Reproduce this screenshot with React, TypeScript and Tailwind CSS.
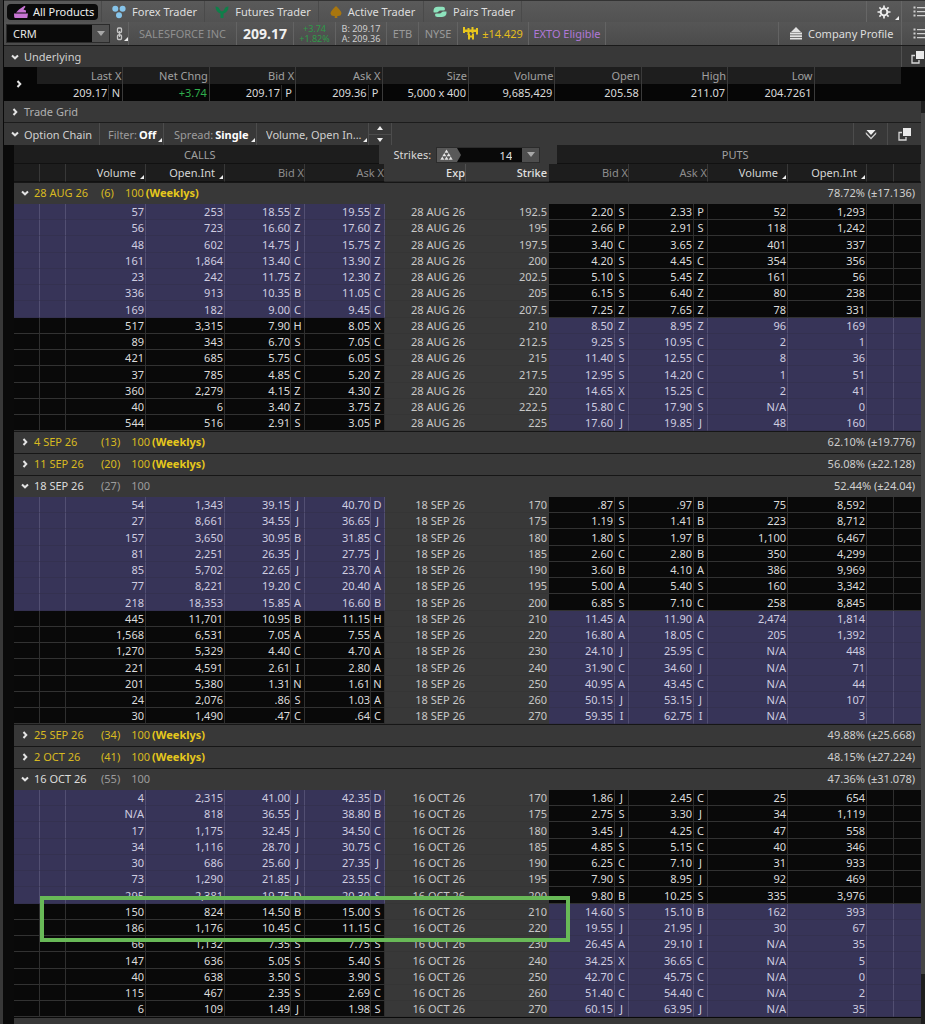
import type { ReactNode } from 'react';

interface Expiry {
  date: string;
  days: number;
  weekly: boolean;
  iv: string;
  rows?: string[];
}

// volume, open int, bid, exch, ask, exch | strike | bid, exch, ask, exch, volume, open int
const expiries: Expiry[] = [
  {
    date: '28 AUG 26', days: 6, weekly: true, iv: '78.72% (±17.136)',
    rows: [
      '57 253 18.55 Z 19.55 Z 192.5 2.20 S 2.33 P 52 1,293',
      '56 723 16.60 Z 17.60 Z 195 2.66 P 2.91 S 118 1,242',
      '48 602 14.75 J 15.75 Z 197.5 3.40 C 3.65 Z 401 337',
      '161 1,864 13.40 C 13.90 Z 200 4.20 S 4.45 C 354 356',
      '23 242 11.75 Z 12.30 Z 202.5 5.10 S 5.45 Z 161 56',
      '336 913 10.35 B 11.05 C 205 6.15 S 6.40 Z 80 238',
      '169 182 9.00 C 9.45 C 207.5 7.25 Z 7.65 Z 78 331',
      '517 3,315 7.90 H 8.05 X 210 8.50 Z 8.95 Z 96 169',
      '89 343 6.70 S 7.05 C 212.5 9.25 S 10.95 C 2 1',
      '421 685 5.75 C 6.05 S 215 11.40 S 12.55 C 8 36',
      '37 785 4.85 C 5.20 Z 217.5 12.95 S 14.20 C 1 51',
      '360 2,279 4.15 Z 4.30 Z 220 14.65 X 15.25 C 2 41',
      '40 6 3.40 Z 3.75 Z 222.5 15.80 C 17.90 S N/A 0',
      '544 516 2.91 S 3.05 P 225 17.60 J 19.85 J 48 160',
    ],
  },
  { date: '4 SEP 26', days: 13, weekly: true, iv: '62.10% (±19.776)' },
  { date: '11 SEP 26', days: 20, weekly: true, iv: '56.08% (±22.128)' },
  {
    date: '18 SEP 26', days: 27, weekly: false, iv: '52.44% (±24.04)',
    rows: [
      '54 1,343 39.15 J 40.70 D 170 .87 S .97 B 75 8,592',
      '27 8,661 34.55 J 36.65 J 175 1.19 S 1.41 B 223 8,712',
      '157 3,650 30.95 B 31.85 C 180 1.80 S 1.97 B 1,100 6,467',
      '81 2,251 26.35 J 27.75 J 185 2.60 C 2.80 B 350 4,299',
      '85 5,702 22.65 J 23.70 A 190 3.60 B 4.10 A 386 9,969',
      '77 8,221 19.20 C 20.40 A 195 5.00 A 5.40 S 160 3,342',
      '218 18,353 15.85 A 16.60 B 200 6.85 S 7.10 C 258 8,845',
      '445 11,701 10.95 B 11.15 H 210 11.45 A 11.90 A 2,474 1,814',
      '1,568 6,531 7.05 A 7.55 A 220 16.80 A 18.05 C 205 1,392',
      '1,270 5,329 4.40 C 4.70 A 230 24.10 J 25.95 C N/A 448',
      '221 4,591 2.61 I 2.80 A 240 31.90 C 34.60 J N/A 71',
      '201 5,380 1.31 N 1.61 N 250 40.95 A 43.45 C N/A 44',
      '24 2,076 .86 S 1.03 A 260 50.15 J 53.15 J N/A 107',
      '30 1,490 .47 C .64 C 270 59.35 I 62.75 I N/A 3',
    ],
  },
  { date: '25 SEP 26', days: 34, weekly: true, iv: '49.88% (±25.668)' },
  { date: '2 OCT 26', days: 41, weekly: true, iv: '48.15% (±27.224)' },
  {
    date: '16 OCT 26', days: 55, weekly: false, iv: '47.36% (±31.078)',
    rows: [
      '4 2,315 41.00 J 42.35 D 170 1.86 J 2.45 C 25 654',
      'N/A 818 36.55 J 38.80 B 175 2.75 S 3.30 J 34 1,119',
      '17 1,175 32.45 J 34.50 C 180 3.45 J 4.25 C 47 558',
      '34 1,116 28.70 J 30.75 C 185 4.85 S 5.15 C 40 346',
      '30 686 25.60 J 27.35 J 190 6.25 C 7.10 J 31 933',
      '73 1,290 21.85 J 23.55 C 195 7.90 S 8.95 J 92 469',
      '295 2,381 19.75 D 20.30 S 200 9.80 B 10.25 S 335 3,976',
      '150 824 14.50 B 15.00 S 210 14.60 S 15.10 B 162 393',
      '186 1,176 10.45 C 11.15 C 220 19.55 J 21.95 J 30 67',
      '66 1,132 7.35 S 7.75 S 230 26.45 A 29.10 I N/A 35',
      '147 636 5.05 S 5.40 S 240 34.25 X 36.65 C N/A 5',
      '40 638 3.50 S 3.90 S 250 42.70 C 45.75 C N/A 0',
      '115 467 2.35 S 2.69 C 260 51.40 C 54.40 C N/A 2',
      '6 109 1.49 J 1.98 S 270 60.15 J 63.95 J N/A 35',
    ],
  },
];

// first row index that is in the money for puts
const ATM = 7;
const marked = { date: '16 OCT 26', strike: '210' };

const ITM = 'bg-[#373458] border-r-[#524f72] border-b-[#343150]';
const OTM = 'bg-[#090909] border-r-[#2f2f2f] border-b-[#323232]';
const MID = 'bg-[#383838] border-r-[#383838] border-b-[#353535]';

function Chevron({ open }: { open: boolean }) {
  return (
    <svg width="8" height="8" viewBox="0 0 8 8" fill="none" stroke="#e4e4e4" strokeWidth="2" className="shrink-0">
      <path d={open ? 'M1 2.5 L4 5.3 L7 2.5' : 'M2.5 1 L5.3 4 L2.5 7'} />
    </svg>
  );
}

function Corner() {
  return (
    <svg width="4" height="4" viewBox="0 0 4 4" className="shrink-0 pointer-events-none">
      <path d="M4 0 V4 H0 Z" fill="#eee" />
    </svg>
  );
}

function ListIcon() {
  return (
    <svg width="12" height="11" viewBox="0 0 12 11" fill="#d0d0d0">
      <path d="M1 1h1v1H1zM4 1h8v1.300H4zM1 5h1v1H1zM4 5h8v1.300H4zM1 9h1v1H1zM4 9h8v1.300H4z" />
      <path d="M.5.5h2v2h-2zM.5 4.500h2v2h-2zM.5 8.500h2v2h-2z" />
    </svg>
  );
}

function PopOut() {
  return (
    <svg width="14" height="14" viewBox="0 0 14 14" className="shrink-0">
      <path d="M4 5.5H1V13H8V10" fill="none" stroke="#d8d8d8" strokeWidth="1.3" />
      <path d="M5 1h8v8H5z" fill="#eaeaea" />
    </svg>
  );
}

function DownTriangle() {
  return (
    <svg width="8" height="5" viewBox="0 0 8 5">
      <path d="M0 0H8L4 5Z" fill="#a8a8a8" />
    </svg>
  );
}

const tabIcons: Record<string, ReactNode> = {
  'All Products': (
    <svg width="14" height="14" viewBox="0 0 14 14" fill="#c774d2">
      <path d="M0 8.500 H14 L13.300 13 H1.300 Q.3 13 .2 12Z" />
      <path d="M2 7.500 L5 4.500 L10.500 .8 L11.500 1.800 L9.500 4.500 L12 5.500 V7.500Z" />
    </svg>
  ),
  'Forex Trader': (
    <svg width="14" height="14" viewBox="0 0 14 14" fill="#86c4ea">
      <circle cx="3.3" cy="3.8" r="3" />
      <circle cx="10.6" cy="3.8" r="3" />
      <circle cx="7" cy="10.2" r="3" />
    </svg>
  ),
  'Futures Trader': (
    <svg width="14" height="14" viewBox="0 0 14 14" fill="#0f7f4a">
      <path d="M.5 1.500 Q3.800 1.500 4.500 4 Q4.800 5.500 7 6.500 Q9.200 5.500 9.500 4 Q10.200 1.500 13.500 1.500 Q13.500 7 8.500 8.500 V13 H5.500 V8.500 Q.5 7 .5 1.500Z" />
    </svg>
  ),
  'Active Trader': (
    <svg width="12" height="14" viewBox="0 0 12 14" fill="#a8760f">
      <path d="M6 1 Q11.5 6 11.5 8.5 Q11 11.5 7.3 11 V13 H4.7 V11 Q1 11.5 .5 8.5 Q.5 6 6 1Z" />
    </svg>
  ),
  'Pairs Trader': (
    <svg width="14" height="14" viewBox="0 0 14 14" fill="#8de3bd">
      <path d="M.5 7 Q0 1.800 5 1.800 H9.500 Q12 1.800 12 4 Q12 5.600 10.500 5.600 H7.500 Q6.200 5.600 5.500 6.600 Q4.800 7.600 3.500 7.600 H1Z" />
      <path d="M13.500 6.600 Q14 12 9 12 H4.500 Q2 12 2 9.900 Q2 8.500 3.500 8.500 H6.500 Q7.800 8.500 8.500 7.400 Q9.200 6.400 10.500 6.400 H13Z" />
    </svg>
  ),
};

function Tabs() {
  const tabs = [
    { name: 'Forex Trader', width: 'w-[103px]' },
    { name: 'Futures Trader', width: 'w-[114px]' },
    { name: 'Active Trader', width: 'w-[105px]' },
    { name: 'Pairs Trader', width: 'w-[98px]' },
  ];
  return (
    <nav className="flex h-[22px] border-t border-t-[#333] bg-linear-to-b from-[#5a5a5a] to-[#525252] text-[#dedede]">
      <div className="flex w-[98px] shrink-0 items-center border-r border-[#4a4a4a] px-[3px]">
        <button className="flex h-4 w-full items-center gap-[5px] rounded bg-[#0a0a0a] pl-[7px] text-[#eee]">
          {tabIcons['All Products']}
          All Products
        </button>
      </div>
      {tabs.map(t => (
        <button
          key={t.name}
          className={`flex shrink-0 items-center justify-center gap-1.5 border-r border-[#4a4a4a] pl-[3px] ${t.width}`}
        >
          {tabIcons[t.name]}
          {t.name}
        </button>
      ))}
      <button
        aria-label="Settings"
        className="ml-auto flex w-[35px] shrink-0 items-center justify-end gap-1 border-l border-[#666] pr-0.5"
      >
        <svg width="14" height="14" viewBox="0 0 14 14" fill="none" stroke="#ededed">
          <circle cx="7" cy="7" r="3.4" strokeWidth="2" />
          <path
            d="M7 .5V3M7 11V13.500M.5 7H3M11 7H13.500M2.400 2.400L4 4M10 10L11.600 11.600M2.400 11.600L4 10M10 4L11.600 2.400"
            strokeWidth="1.7"
          />
        </svg>
        <span className="self-end pb-0.5"><Corner /></span>
      </button>
      <button aria-label="Tab list" className="flex w-6 shrink-0 items-center justify-end border-l border-[#666]">
        <ListIcon />
      </button>
    </nav>
  );
}

function SymbolBar() {
  const cell = 'flex shrink-0 items-center justify-center border-r border-[#636363]';
  return (
    <div className="flex h-6 border-b border-[#1a1a1a] bg-linear-to-b from-[#565656] to-[#4b4b4b]">
      <div className={`${cell} w-[125px] justify-start gap-1.5 pl-0.5`}>
        <div className="flex h-[19px] w-[104px] border border-[#2b2b2b] bg-[#090909]">
          <input aria-label="Symbol" defaultValue="CRM" className="w-0 flex-1 pl-1.5 text-[#e6e6e6] outline-none" />
          <button aria-label="Symbol history" className="flex w-[17px] items-center justify-center bg-[#505050]">
            <DownTriangle />
          </button>
        </div>
        <button aria-label="Link color" className="flex items-end">
          <svg width="8" height="14" viewBox="0 0 8 14" fill="none" stroke="#c4c4c4" strokeWidth="1.3">
            <rect x="1.500" y="1" width="4" height="4.500" rx="1" />
            <rect x="1.500" y="8" width="4" height="4.500" rx="1" />
            <path d="M3.500 4V10" />
          </svg>
          <Corner />
        </button>
      </div>
      <div className={`${cell} w-[108px] text-[#8f8f8f]`}>SALESFORCE INC</div>
      <div className={`${cell} w-[57px] text-[14px] font-bold text-[#f0f0f0]`}>209.17</div>
      <div className={`${cell} w-[42px] flex-col text-[9px] leading-[10px] text-[#2f9a49]`}>
        <span>+3.74</span>
        <span>+1.82%</span>
      </div>
      <div className={`${cell} w-[51px] flex-col text-[9px] leading-[10px] text-[#d0d0d0]`}>
        <span>B: 209.17</span>
        <span>A: 209.36</span>
      </div>
      <div className={`${cell} w-8 text-[#9a9a9a]`}>ETB</div>
      <div className={`${cell} w-[39px] text-[#9a9a9a]`}>NYSE</div>
      <div className={`${cell} w-[71px] gap-[3px] text-[#e3bd1d]`}>
        <svg width="16" height="13" viewBox="0 0 16 13" fill="#e8c61c">
          <path d="M0 0H2V2.500H4.500V1H6.500V2.500H8.500V0H10.500V2.500H13V1H15V7.500H13V5H10.500V6H8.500V5H6.500V8H4.500V5H2V6H0Z" />
          <path d="M5 7H7V8.500H9V6.500H11V12.500H9V10.500H7V12.500H5Z" />
        </svg>
        ±14.429
      </div>
      <div className={`${cell} w-[77px] text-[#b078d8]`}>EXTO Eligible</div>
      <button className="ml-auto flex w-[123px] shrink-0 items-center gap-1.5 border-l border-[#636363] pl-[11px] text-[#dedede]">
        <svg width="12" height="13" viewBox="0 0 12 13" fill="#e2e2e2">
          <path d="M6 0L11 5H1ZM0 5.500H12V7.500H0ZM0 8.300H12V10H0ZM0 10.800H12V12.500H0Z" />
        </svg>
        Company Profile
      </button>
      <button aria-label="Gadget list" className="flex w-6 shrink-0 items-center justify-end border-l border-[#636363]">
        <ListIcon />
      </button>
    </div>
  );
}

function Underlying() {
  const quotes = [
    { label: 'Last X', value: '209.17', exch: 'N' },
    { label: 'Net Chng', value: '+3.74' },
    { label: 'Bid X', value: '209.17', exch: 'P' },
    { label: 'Ask X', value: '209.36', exch: 'P' },
    { label: 'Size', value: '5,000 x 400' },
    { label: 'Volume', value: '9,685,429' },
    { label: 'Open', value: '205.58' },
    { label: 'High', value: '211.07' },
    { label: 'Low', value: '204.7261' },
  ];
  return (
    <section>
      <div className="flex h-[21px] items-center bg-[#383838] text-[#d0d0d0]">
        <button className="flex items-center gap-[5px] pl-[7px]">
          <Chevron open />
          Underlying
        </button>
        <button aria-label="Detach underlying" className="ml-auto flex h-full w-6 items-center justify-end border-l border-[#505050]">
          <PopOut />
        </button>
      </div>
      <div className="flex bg-[#060606]">
        <button aria-label="Expand quote" className="flex w-[33px] items-center justify-center pr-1">
          <Chevron open={false} />
        </button>
        <div className="min-w-0 flex-1">
          <table className="w-full table-fixed border-separate border-spacing-0 text-right">
            <thead>
              <tr className="h-[17px]">
                {quotes.map(q => (
                  <th key={q.label} className="border-r border-[#3a3a3a] bg-[#1e1e1e] p-0 pr-px text-right font-normal text-[#a0a0a0]">
                    {q.label}
                  </th>
                ))}
                <th className="bg-[#1e1e1e] p-0" />
              </tr>
            </thead>
            <tbody>
              <tr className="h-[17px] text-[#dadada]">
                {quotes.map(q => (
                  <td key={q.label} className="border-r border-[#3a3a3a] p-0">
                    <div className={`flex justify-end ${q.label === 'Net Chng' ? 'text-[#2fae4c]' : ''}`}>
                      <span className={q.exch ? 'pr-px' : 'pr-0.5'}>{q.value}</span>
                      {q.exch && <span className="w-3.5 border-l border-[#2c2c2c] text-center">{q.exch}</span>}
                    </div>
                  </td>
                ))}
                <td className="p-0" />
              </tr>
            </tbody>
          </table>
        </div>
        <div className="w-6 shrink-0" />
      </div>
    </section>
  );
}

function ChainBar() {
  const menu = 'flex shrink-0 items-center border-r border-[#4c4c4c] text-[#9c9c9c]';
  const select = 'appearance-none bg-transparent outline-none';
  return (
    <div className="flex h-[22px] bg-[#383838]">
      <button className="flex w-[96px] shrink-0 items-center gap-[5px] border-r border-[#4c4c4c] pl-[7px] text-[#d0d0d0]">
        <Chevron open />
        Option Chain
      </button>
      <label className={`${menu} w-16 pl-2 pr-px`}>
        Filter:
        <select className={`${select} ml-0.5 w-0 flex-1 font-bold text-white`}>
          <option>Off</option>
        </select>
        <span className="self-end pb-[3px]"><Corner /></span>
      </label>
      <label className={`${menu} w-[93px] pl-[10px] pr-px`}>
        Spread:
        <select className={`${select} ml-0.5 w-0 flex-1 font-bold text-white`}>
          <option>Single</option>
        </select>
        <span className="self-end pb-[3px]"><Corner /></span>
      </label>
      <div className={`${menu} w-28 pl-[9px] pr-px`}>
        <select aria-label="Layout" className={`${select} w-0 flex-1 text-[#d0d0d0]`}>
          <option>Volume, Open In...</option>
        </select>
        <span className="self-end pb-[3px]"><Corner /></span>
      </div>
      <div className="flex w-[23px] shrink-0 flex-col border-r border-[#4c4c4c]">
        <button aria-label="Previous layout" className="flex flex-1 items-center justify-center border-b border-[#4c4c4c]">
          <svg width="6" height="4" viewBox="0 0 6 4"><path d="M3 0L6 4H0Z" fill="#eee" /></svg>
        </button>
        <button aria-label="Next layout" className="flex flex-1 items-center justify-center">
          <svg width="6" height="4" viewBox="0 0 6 4"><path d="M3 4L6 0H0Z" fill="#eee" /></svg>
        </button>
      </div>
      <button aria-label="Collapse all" className="ml-auto flex w-[34px] items-center justify-center border-l border-[#4c4c4c]">
        <svg width="12" height="11" viewBox="0 0 12 11">
          <path d="M1.500 1H10.500L6 6Z" fill="#f0f0f0" />
          <path d="M.8 3L6 8.500L11.200 3V5L6 10.500L.8 5Z" fill="#d0d0d0" />
        </svg>
      </button>
      <button aria-label="Detach option chain" className="flex w-[34px] items-center justify-center border-l border-[#4c4c4c]">
        <PopOut />
      </button>
    </div>
  );
}

function StrikesBar() {
  return (
    <div className="flex h-[19px] text-[#a0a0a0]">
      <div className="flex flex-1 items-center justify-center border-b border-[#111] bg-[#1d1d1d] pl-[7px]">CALLS</div>
      <div className="flex w-[178px] items-center bg-[#383838] pl-[15px] text-[#d8d8d8]">
        <label htmlFor="strikes">Strikes:</label>
        <div className="ml-[5px] flex h-4 w-[104px] border border-[#2b2b2b] bg-[#090909]">
          <button aria-label="Strike mode" className="flex">
            <svg width="24" height="14" viewBox="0 0 24 14">
              <path d="M0 0H20L24 7L20 14H0Z" fill="#595959" />
              <g fill="#e4e4e4">
                <path d="M9.500 1.500L11.500 4.800H7.500ZM7.300 5L9.300 8.300H5.300ZM11.700 5L13.700 8.300H9.700ZM5.300 8.500L7.300 11.800H3.300ZM9.500 8.500L11.500 11.800H7.500ZM13.700 8.500L15.700 11.800H11.700Z" />
              </g>
            </svg>
          </button>
          <select id="strikes" className="w-0 flex-1 appearance-none pr-2.5 text-[#e0e0e0] outline-none [text-align-last:right]">
            <option>14</option>
          </select>
          <span className="pointer-events-none flex w-[17px] items-center justify-center bg-[#4e4e4e]">
            <DownTriangle />
          </span>
        </div>
      </div>
      <div className="flex flex-1 items-center justify-center border-b border-[#111] bg-[#1d1d1d] pr-[7px]">PUTS</div>
    </div>
  );
}

function SortHead({ children }: { children: ReactNode }) {
  return (
    <th className="border-r border-b border-r-[#383838] border-b-[#111] p-0 font-normal text-[#d6d6d6]">
      <button className="flex w-full items-center justify-end gap-1 pr-px">
        {children}
        <span className="self-end pb-px"><Corner /></span>
      </button>
    </th>
  );
}

function QuoteHead({ children }: { children: ReactNode }) {
  return (
    <th colSpan={2} className="border-r border-b border-r-[#383838] border-b-[#111] p-0 text-right font-normal text-[#8d8d8d]">
      {children}
    </th>
  );
}

function BlankHead() {
  return <th className="border-r border-b border-r-[#383838] border-b-[#111] p-0" />;
}

function OptionRow({ date, row, index }: { date: string; row: string; index: number }) {
  const v = row.split(' ');
  const call = index < ATM ? ITM : OTM;
  const put = index < ATM ? OTM : ITM;
  const td = 'border-r border-b p-0 ';
  const ink = index < ATM ? 'text-[#cfcde0]' : 'text-[#dcdcdc]';
  const putInk = index < ATM ? 'text-[#dcdcdc]' : 'text-[#cfcde0]';
  const isMarked = date === marked.date && v[6] === marked.strike;

  return (
    <tr className="h-4 text-right leading-[15px] nth-[4n]:h-[17px]">
      <td className={td + call} />
      <td className={`${td}${call} ${isMarked ? 'relative z-10' : ''}`}>
        {isMarked && (
          <div className="pointer-events-none absolute -top-2 left-0 h-[46px] w-[530px] border-4 border-[#68b957]" />
        )}
      </td>
      <td className={`${td}${call} ${ink} pr-px`}>{v[0]}</td>
      <td className={`${td}${call} ${ink} pr-px`}>{v[1]}</td>
      <td className={`${td}${call} ${ink}`}>{v[2]}</td>
      <td className={`${td}${call} ${ink} text-center`}>{v[3]}</td>
      <td className={`${td}${call} ${ink}`}>{v[4]}</td>
      <td className={`${td}${call} ${ink} text-center`}>{v[5]}</td>
      <td className={`${td}${MID} border-r-[#555] text-[#c8c8c8]`}>{date}</td>
      <td className={`${td}${MID} pr-px text-[#c8c8c8]`}>{v[6]}</td>
      <td className={`${td}${put} ${putInk} pr-px`}>{v[7]}</td>
      <td className={`${td}${put} ${putInk} text-center`}>{v[8]}</td>
      <td className={`${td}${put} ${putInk} pr-px`}>{v[9]}</td>
      <td className={`${td}${put} ${putInk} text-center`}>{v[10]}</td>
      <td className={`${td}${put} ${putInk} pr-px`}>{v[11]}</td>
      <td className={`${td}${put} ${putInk} pr-px`}>{v[12]}</td>
      <td className={td + put} />
      <td className={`border-b p-0 ${put}`} />
    </tr>
  );
}

function ExpiryGroup({ expiry }: { expiry: Expiry }) {
  const { date, days, weekly, iv, rows } = expiry;
  return (
    <tbody>
      <tr className="h-[22px]">
        <td colSpan={18} className="border-t border-[#161616] bg-[#383838] p-0 pb-0.5">
          <div className={`flex items-center ${weekly ? 'text-[#d8ba20]' : 'text-[#9c9c9c]'}`}>
            <button className={`flex w-[87px] items-center gap-[5px] pl-[7px] ${weekly ? '' : 'text-[#dcdcdc]'}`}>
              <Chevron open={!!rows} />
              {date}
            </button>
            <span className="mr-[11px]">({days})</span>
            <span>100</span>
            {weekly && <span className="ml-0.5 font-bold text-[#e6c81c]">(Weeklys)</span>}
            <span className="ml-auto pr-1.5 text-[#cfcfcf]">{iv}</span>
          </div>
        </td>
      </tr>
      {rows?.map((r, i) => <OptionRow key={r} date={date} row={r} index={i} />)}
    </tbody>
  );
}

function ChainTable() {
  return (
    <table className="w-full table-fixed border-separate border-spacing-0">
      <colgroup>
        <col className="w-[26px]" />
        <col className="w-[26px]" />
        <col className="w-[80px]" />
        <col className="w-[79px]" />
        <col className="w-[66px]" />
        <col className="w-[14px]" />
        <col className="w-[66px]" />
        <col className="w-[14px]" />
        <col className="w-[81px]" />
        <col className="w-[83px]" />
        <col className="w-[66px]" />
        <col className="w-[14px]" />
        <col className="w-[65px]" />
        <col className="w-[14px]" />
        <col className="w-[80px]" />
        <col className="w-[79px]" />
        <col className="w-[27px]" />
        <col className="w-[27px]" />
      </colgroup>
      <thead className="bg-[#1d1d1d]">
        <tr className="h-[18px]">
          <BlankHead />
          <BlankHead />
          <SortHead>Volume</SortHead>
          <SortHead>Open.Int</SortHead>
          <QuoteHead>Bid X</QuoteHead>
          <QuoteHead>Ask X</QuoteHead>
          <th className="border-r border-b border-r-[#505050] border-b-[#2a2a2a] bg-[#383838] p-0 text-right font-medium text-[#e2e2e2]">Exp</th>
          <th className="border-b border-b-[#2a2a2a] bg-[#383838] p-0 pr-0.5 text-right font-medium text-[#e2e2e2]">Strike</th>
          <QuoteHead>Bid X</QuoteHead>
          <QuoteHead>Ask X</QuoteHead>
          <SortHead>Volume</SortHead>
          <SortHead>Open.Int</SortHead>
          <BlankHead />
          <BlankHead />
        </tr>
      </thead>
      {expiries.map(e => <ExpiryGroup key={e.date} expiry={e} />)}
    </table>
  );
}

export default function App() {
  return (
    <div className="flex min-h-screen overflow-hidden bg-[#0a0a0a] font-['Noto_Sans','Open_Sans',sans-serif] text-[11px] leading-[15px]">
      <div className="w-[3px] shrink-0 bg-[#383838]" />
      <main className="min-w-0 flex-1 pl-px">
        <Tabs />
        <SymbolBar />
        <Underlying />
        <div className="flex">
          <div className="min-w-0 flex-1">
            <div className="flex h-[22px] items-center border-b border-[#1c1c1c] bg-[#383838] text-[#b0b0b0]">
              <button className="flex items-center gap-[5px] pl-[7px]">
                <Chevron open={false} />
                Trade Grid
              </button>
            </div>
            <ChainBar />
            <div className="pl-[10px]">
              <StrikesBar />
              <ChainTable />
              <div className="h-[7px] border-t border-[#0a0a0a] bg-[#383838]" />
            </div>
          </div>
          {/* Scrollbar */}
          <div className="flex w-1 flex-col bg-[#1e1e1e] pt-3">
            <div className="h-[861px] bg-[#454545]" />
          </div>
        </div>
      </main>
    </div>
  );
}
